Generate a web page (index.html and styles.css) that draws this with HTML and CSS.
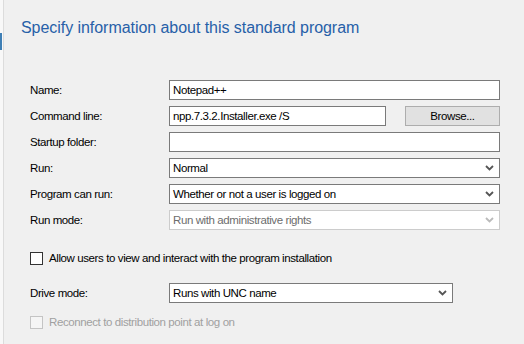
FILE: index.html
```html
<!DOCTYPE html>
<html lang="en">
<head>
    <meta charset="UTF-8">
    <title>Standard Program</title>
    <link rel="stylesheet" href="styles.css">
</head>
<body>
    <div class="page">
        <!-- active page marker on the wizard rail -->
        <div class="marker"></div>

        <h1>Specify information about this standard program</h1>

        <div class="form">
            <div class="row">
                <label>Name:</label>
                <div class="field wide">Notepad++</div>
            </div>
            <div class="row">
                <label>Command line:</label>
                <div class="field cmd">npp.7.3.2.Installer.exe /S</div>
                <button class="browse">Browse...</button>
            </div>
            <div class="row">
                <label>Startup folder:</label>
                <div class="field wide"></div>
            </div>
            <div class="row">
                <label>Run:</label>
                <div class="field wide select">
                    <span>Normal</span>
                    <svg class="chev" width="9" height="6" viewBox="0 0 9 6"><polyline points="1,1 4.5,4.5 8,1" fill="none" stroke="currentColor" stroke-width="1.8"/></svg>
                </div>
            </div>
            <div class="row">
                <label>Program can run:</label>
                <div class="field wide select">
                    <span>Whether or not a user is logged on</span>
                    <svg class="chev" width="9" height="6" viewBox="0 0 9 6"><polyline points="1,1 4.5,4.5 8,1" fill="none" stroke="currentColor" stroke-width="1.8"/></svg>
                </div>
            </div>
            <div class="row">
                <label>Run mode:</label>
                <div class="field wide select disabled">
                    <span>Run with administrative rights</span>
                    <svg class="chev" width="9" height="6" viewBox="0 0 9 6"><polyline points="1,1 4.5,4.5 8,1" fill="none" stroke="currentColor" stroke-width="1.8"/></svg>
                </div>
            </div>

            <div class="check first">
                <span class="box"></span>
                <span>Allow users to view and interact with the program installation</span>
            </div>

            <div class="row drive">
                <label>Drive mode:</label>
                <div class="field short select">
                    <span>Runs with UNC name</span>
                    <svg class="chev" width="9" height="6" viewBox="0 0 9 6"><polyline points="1,1 4.5,4.5 8,1" fill="none" stroke="currentColor" stroke-width="1.8"/></svg>
                </div>
            </div>

            <div class="check off">
                <span class="box"></span>
                <span>Reconnect to distribution point at log on</span>
            </div>
        </div>
    </div>
</body>
</html>
```

FILE: styles.css
```css
body {
    margin: 0;
    width: 524px;
    height: 344px;
    overflow: hidden;
    background-color: #f0f0f0;
    font-family: "Liberation Sans", Arial, sans-serif;
    font-size: 11.5px;
    letter-spacing: -0.4px;
    color: #000;
}

.page {
    position: relative;
    height: 344px;
    border-left: 3px solid #f8f8f8;
    box-shadow: inset 1px 0 0 #dcdcdc;
}

.marker {
    position: absolute;
    left: -3px;
    top: 33px;
    width: 2px;
    height: 17px;
    background-color: #3f7fb5;
}

h1 {
    margin: 0;
    padding: 18px 0 0 18px;
    font-size: 16px;
    font-weight: normal;
    letter-spacing: -0.05px;
    color: #2760a8;
    line-height: 19px;
}

.form {
    padding: 43px 0 0 27px;
}

.row {
    display: flex;
    align-items: center;
    height: 20px;
    margin-bottom: 6px;
}

.row label {
    width: 139px;
    flex-shrink: 0;
}

.field {
    box-sizing: border-box;
    height: 20px;
    border: 1px solid #7a7a7a;
    background-color: #fff;
    padding: 0 3px;
    line-height: 18px;
    white-space: nowrap;
}

.wide {
    width: 331px;
}

.cmd {
    width: 217px;
}

.short {
    width: 284px;
}

.select {
    display: flex;
    align-items: center;
    justify-content: space-between;
    padding-right: 5px;
}

.chev {
    color: #555;
}

.disabled {
    border-color: #cccccc;
    color: #6d6d6d;
}

.disabled .chev {
    color: #bbb;
}

.browse {
    box-sizing: border-box;
    width: 95px;
    height: 20px;
    margin-left: 19px;
    background-color: #e1e1e1;
    border: 1px solid #adadad;
    font-family: inherit;
    font-size: inherit;
    letter-spacing: inherit;
    padding: 0;
}

.check {
    display: flex;
    align-items: center;
    gap: 6px;
    height: 14px;
}

.check .box {
    box-sizing: border-box;
    width: 13px;
    height: 13px;
    border: 1px solid #333;
    background-color: #fff;
}

.first {
    margin-top: 21px;
    margin-bottom: 18px;
}

.drive {
    margin-bottom: 12px;
}

.off {
    color: #a0a0a0;
}

.off .box {
    border-color: #c4c4c4;
    background-color: #f5f5f5;
}
```
